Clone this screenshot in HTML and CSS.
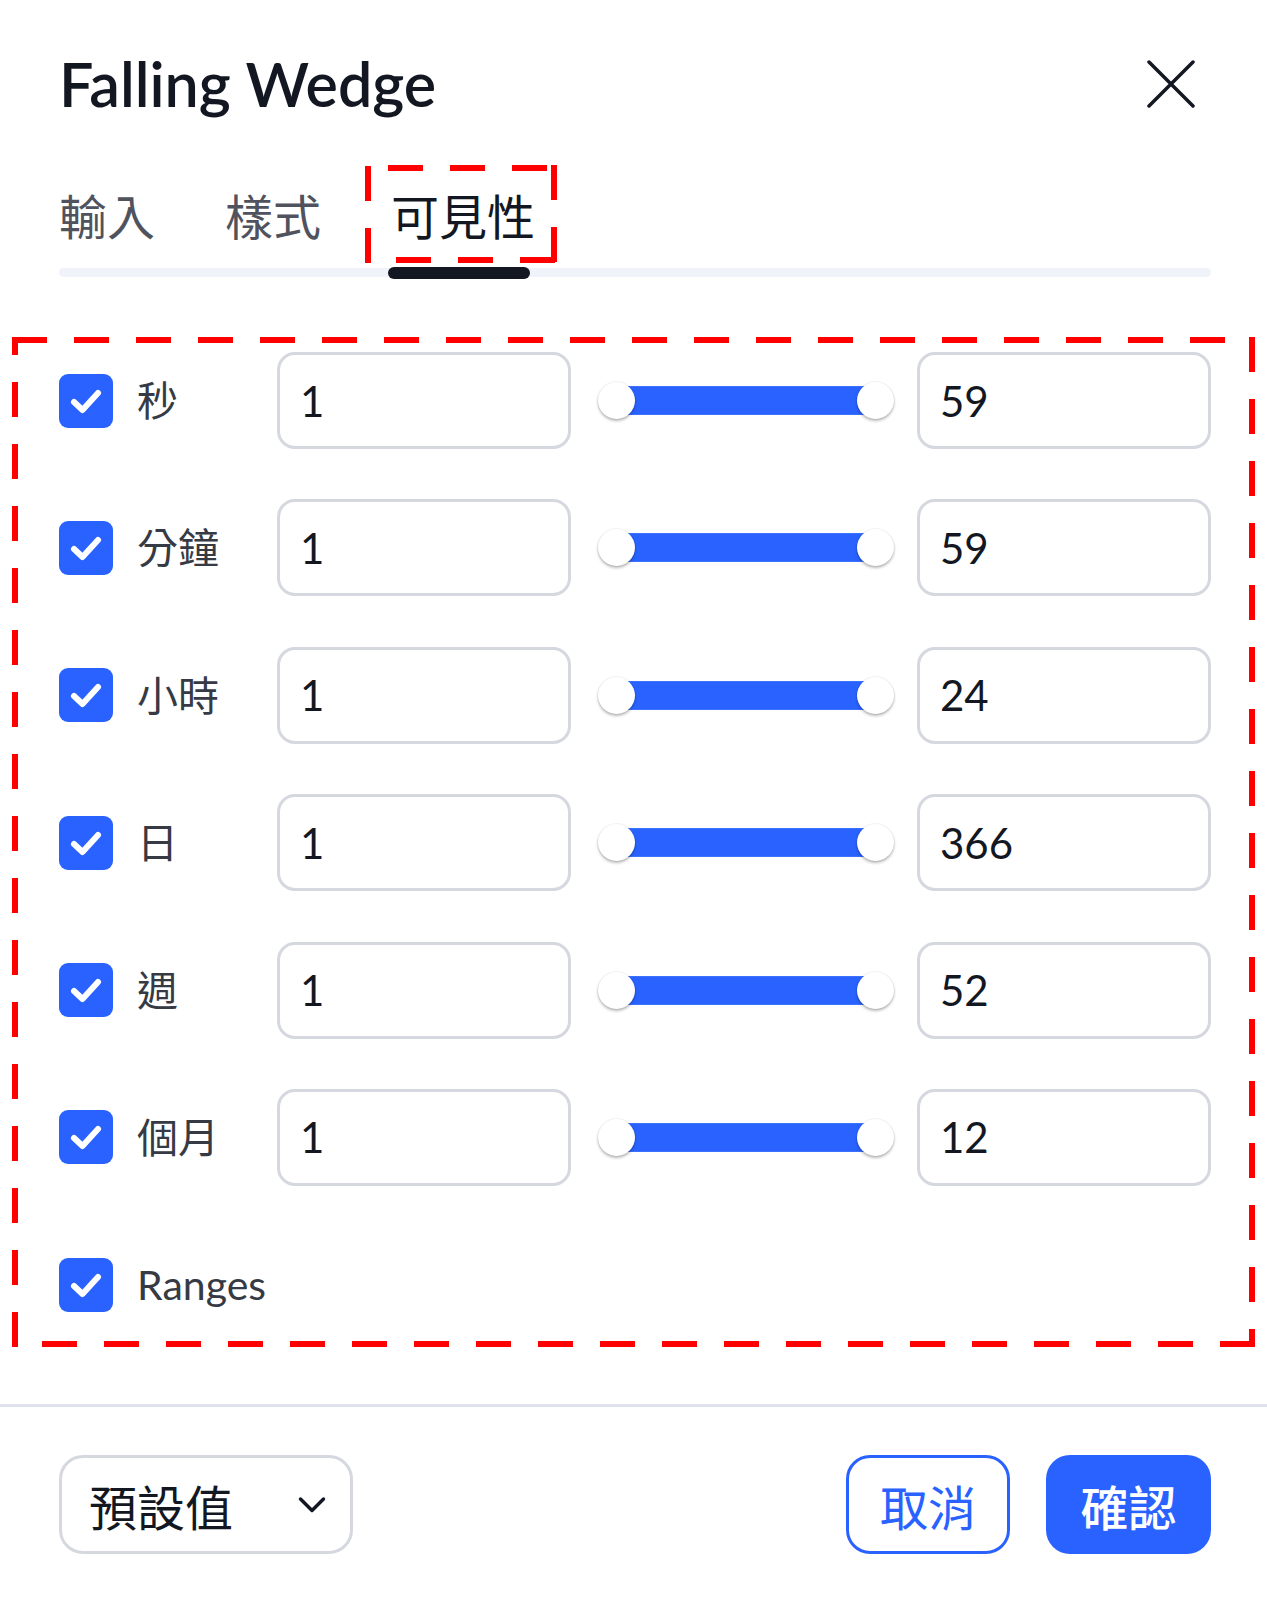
FILE: index.html
```html
<!DOCTYPE html>
<html lang="zh-Hant">
<head>
<meta charset="utf-8">
<title>Falling Wedge</title>
<link rel="stylesheet" href="styles.css">
</head>
<body>
<div class="dialog">
  <header class="head">
    <h1 class="title">Falling Wedge</h1>
    <button class="close" aria-label="close">
      <svg width="48" height="48" viewBox="0 0 48 48"><path d="M2 2 L46 46 M46 2 L2 46" stroke="#131722" stroke-width="3.5" stroke-linecap="round" fill="none"/></svg>
    </button>
  </header>

  <nav class="tabs">
    <span class="tab">輸入</span>
    <span class="tab">樣式</span>
    <span class="tab active">可見性
      <svg class="mark-small" width="192" height="98" viewBox="0 0 192 98">
        <g stroke="#ff0000" stroke-width="6" fill="none" stroke-dasharray="35 27">
          <line x1="192" y1="3" x2="0" y2="3" stroke-dashoffset="-10"/>
          <line x1="189" y1="0" x2="189" y2="98"/>
          <line x1="192" y1="95" x2="0" y2="95" stroke-dashoffset="-2"/>
          <line x1="3" y1="98" x2="3" y2="0"/>
        </g>
      </svg>
    </span>
  </nav>
  <div class="track"></div>

  <section class="list">
    <svg class="mark-big" width="1243" height="1010" viewBox="0 0 1243 1010">
      <g stroke="#ff0000" stroke-width="6" fill="none" stroke-dasharray="35 27">
        <line x1="0" y1="3" x2="1243" y2="3"/>
        <line x1="1240" y1="0" x2="1240" y2="1010"/>
        <line x1="1243" y1="1007" x2="0" y2="1007"/>
        <line x1="3" y1="1010" x2="3" y2="0"/>
      </g>
    </svg>

    <div class="row">
      <span class="cb"><svg width="54" height="54" viewBox="0 0 54 54"><path d="M15 28 L23.5 36 L39 19" stroke="#fff" stroke-width="6" stroke-linecap="round" stroke-linejoin="round" fill="none"/></svg></span>
      <span class="label">秒</span>
      <div class="field">1</div>
      <div class="slider"><span class="knob"></span><span class="bar"></span><span class="knob"></span></div>
      <div class="field">59</div>
    </div>
    <div class="row">
      <span class="cb"><svg width="54" height="54" viewBox="0 0 54 54"><path d="M15 28 L23.5 36 L39 19" stroke="#fff" stroke-width="6" stroke-linecap="round" stroke-linejoin="round" fill="none"/></svg></span>
      <span class="label">分鐘</span>
      <div class="field">1</div>
      <div class="slider"><span class="knob"></span><span class="bar"></span><span class="knob"></span></div>
      <div class="field">59</div>
    </div>
    <div class="row">
      <span class="cb"><svg width="54" height="54" viewBox="0 0 54 54"><path d="M15 28 L23.5 36 L39 19" stroke="#fff" stroke-width="6" stroke-linecap="round" stroke-linejoin="round" fill="none"/></svg></span>
      <span class="label">小時</span>
      <div class="field">1</div>
      <div class="slider"><span class="knob"></span><span class="bar"></span><span class="knob"></span></div>
      <div class="field">24</div>
    </div>
    <div class="row">
      <span class="cb"><svg width="54" height="54" viewBox="0 0 54 54"><path d="M15 28 L23.5 36 L39 19" stroke="#fff" stroke-width="6" stroke-linecap="round" stroke-linejoin="round" fill="none"/></svg></span>
      <span class="label">日</span>
      <div class="field">1</div>
      <div class="slider"><span class="knob"></span><span class="bar"></span><span class="knob"></span></div>
      <div class="field">366</div>
    </div>
    <div class="row">
      <span class="cb"><svg width="54" height="54" viewBox="0 0 54 54"><path d="M15 28 L23.5 36 L39 19" stroke="#fff" stroke-width="6" stroke-linecap="round" stroke-linejoin="round" fill="none"/></svg></span>
      <span class="label">週</span>
      <div class="field">1</div>
      <div class="slider"><span class="knob"></span><span class="bar"></span><span class="knob"></span></div>
      <div class="field">52</div>
    </div>
    <div class="row">
      <span class="cb"><svg width="54" height="54" viewBox="0 0 54 54"><path d="M15 28 L23.5 36 L39 19" stroke="#fff" stroke-width="6" stroke-linecap="round" stroke-linejoin="round" fill="none"/></svg></span>
      <span class="label">個月</span>
      <div class="field">1</div>
      <div class="slider"><span class="knob"></span><span class="bar"></span><span class="knob"></span></div>
      <div class="field">12</div>
    </div>
    <div class="row">
      <span class="cb"><svg width="54" height="54" viewBox="0 0 54 54"><path d="M15 28 L23.5 36 L39 19" stroke="#fff" stroke-width="6" stroke-linecap="round" stroke-linejoin="round" fill="none"/></svg></span>
      <span class="label wide">Ranges</span>
    </div>
  </section>

  <footer class="foot">
    <div class="select">
      <span>預設值</span>
      <svg width="28" height="18" viewBox="0 0 28 18"><path d="M2.5 3 L14 14.5 L25.5 3" stroke="#131722" stroke-width="3.5" stroke-linecap="round" stroke-linejoin="round" fill="none"/></svg>
    </div>
    <div class="btns">
      <button class="btn cancel">取消</button>
      <button class="btn ok">確認</button>
    </div>
  </footer>
</div>
</body>
</html>
```

FILE: styles.css
```css
* { box-sizing: border-box; }

body {
  margin: 0;
  background: #ffffff;
  font-family: "Lato", "Noto Sans CJK TC", sans-serif;
  color: #131722;
}

.dialog {
  width: 1267px;
}

.head {
  display: flex;
  align-items: center;
  justify-content: space-between;
  padding: 48px 56px 0 59px;
}

.title {
  margin: 0;
  font-size: 61px;
  font-weight: 600;
  line-height: 72px;
  color: #131722;
}

.close {
  display: flex;
  padding: 0;
  margin: 0 16px 0 0;
  border: 0;
  background: none;
}

.tabs {
  display: flex;
  gap: 70px;
  margin-top: 58px;
  padding-left: 59px;
  font-family: "Noto Sans CJK TC", sans-serif;
  font-size: 48px;
  line-height: 72px;
}

.tab {
  position: relative;
  color: #50535e;
}

.tab.active {
  color: #131722;
}

.tab.active::after {
  content: "";
  position: absolute;
  left: -3px;
  top: 89px;
  width: 142px;
  height: 12px;
  border-radius: 6px;
  background: #131722;
}

.mark-small {
  position: absolute;
  left: -26px;
  top: -13px;
}

.track {
  margin: 18px 56px 0 59px;
  height: 9px;
  border-radius: 5px;
  background: #f0f3fa;
}

.list {
  position: relative;
  margin: 60px 12px 0 12px;
  padding: 15px 44px 14px 47px;
  display: flex;
  flex-direction: column;
  gap: 50.4px;
}

.mark-big {
  position: absolute;
  left: 0;
  top: 0;
}

.row {
  display: grid;
  grid-template-columns: 54px 164px 294px 346px 294px;
  align-items: center;
  height: 97px;
}

.cb {
  display: flex;
  width: 54px;
  height: 54px;
  border-radius: 9px;
  background: #2962ff;
}

.label {
  padding-left: 24px;
  font-size: 41px;
  color: #363a45;
  line-height: 1;
}

.label.wide {
  grid-column: 2 / 4;
}

.field {
  height: 97px;
  display: flex;
  align-items: center;
  padding-left: 20px;
  border: 3px solid #d6d8df;
  border-radius: 18px;
  font-size: 42px;
  color: #131722;
}

.slider {
  display: flex;
  align-items: center;
  padding: 0 23px 0 27px;
}

.knob {
  position: relative;
  z-index: 1;
  flex: none;
  width: 37px;
  height: 37px;
  border-radius: 50%;
  background: #ffffff;
  box-shadow: 0 2px 3px rgba(0, 0, 0, 0.28), 0 0 0 1px rgba(0, 0, 0, 0.04);
}

.bar {
  flex: 1;
  height: 29px;
  margin: 0 -18px;
  background: #2962ff;
  box-shadow: inset 0 0 0 1px #3d72ff;
}

.foot {
  margin-top: 57px;
  border-top: 3px solid #e0e3eb;
  padding: 48px 56px 45px 59px;
  display: flex;
  justify-content: space-between;
  align-items: center;
}

.select {
  width: 294px;
  height: 99px;
  display: flex;
  align-items: center;
  justify-content: space-between;
  padding: 0 24px 0 27px;
  border: 3px solid #d6d8df;
  border-radius: 24px;
  font-size: 48px;
  color: #131722;
}

.btns {
  display: flex;
  gap: 36px;
}

.btn {
  height: 99px;
  border-radius: 24px;
  font-family: "Noto Sans CJK TC", sans-serif;
  font-size: 48px;
  padding: 0;
}

.cancel {
  width: 164px;
  background: #ffffff;
  color: #2962ff;
  border: 3px solid #2962ff;
}

.ok {
  width: 165px;
  background: #2962ff;
  color: #ffffff;
  border: 0;
  font-weight: 500;
}
```
